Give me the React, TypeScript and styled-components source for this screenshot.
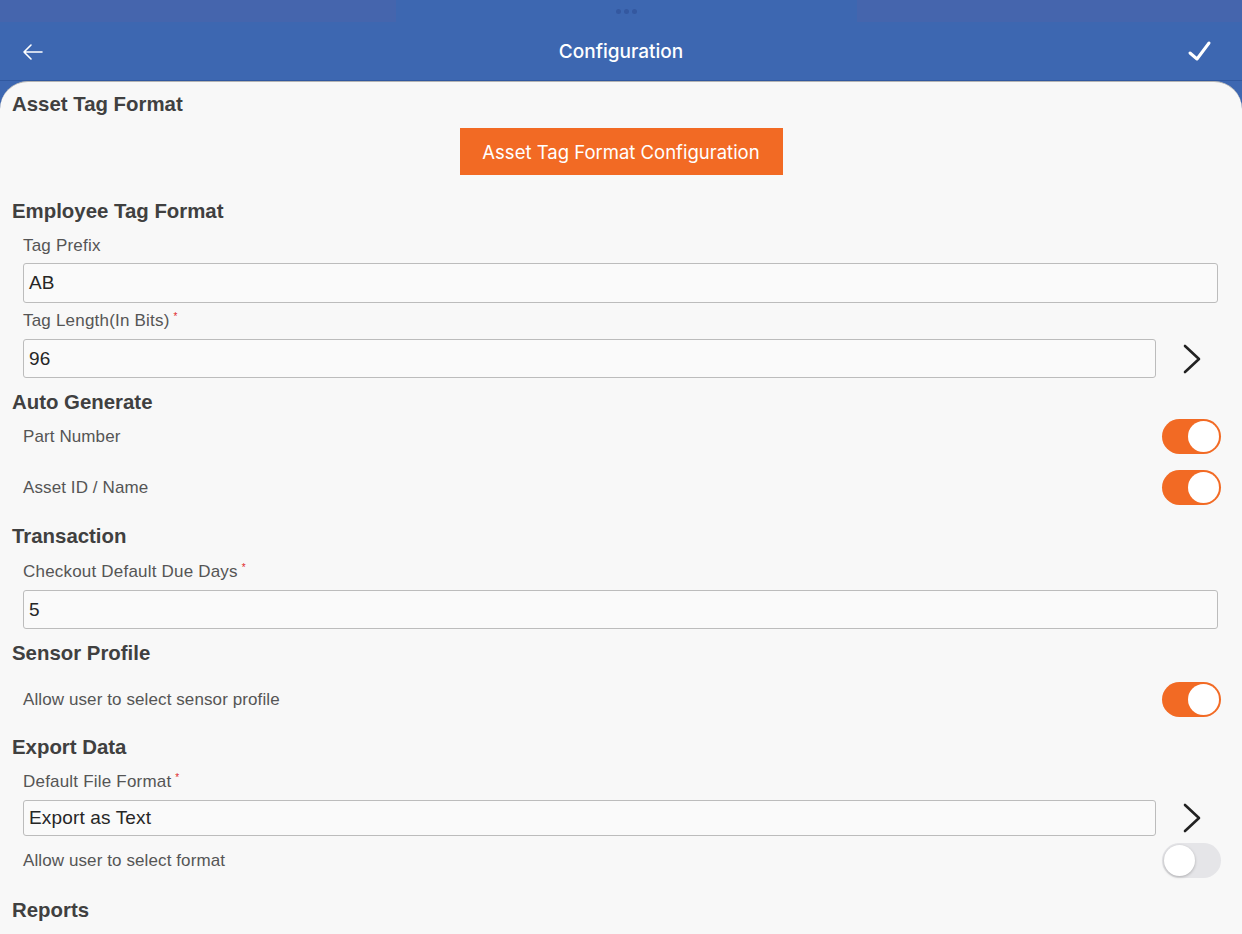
import React from "react";
import styled, { createGlobalStyle } from "styled-components";

const Global = createGlobalStyle`
  html, body { margin: 0; padding: 0; }
  body { background: #f8f8f8; font-family: "Liberation Sans", Arial, sans-serif; }
  * { box-sizing: border-box; }
`;

const Page = styled.div`
  width: 1242px;
  height: 934px;
  overflow: hidden;
  background: #3d67b1;
  display: flex;
  flex-direction: column;
`;

const StatusStrip = styled.div`
  height: 22px;
  display: grid;
  grid-template-columns: 396px 1fr 385px;
`;

const StripPart = styled.div<{ $tone: string }>`
  background: ${(p) => p.$tone};
  display: flex;
  align-items: center;
  justify-content: center;
  gap: 3px;
`;

const Dot = styled.span`
  width: 5px;
  height: 5px;
  border-radius: 50%;
  background: #3458a0;
`;

const Header = styled.header`
  height: 59px;
  display: flex;
  align-items: center;
  justify-content: space-between;
  padding: 1px 28px 0 22px;
  border-bottom: 1px solid #30589f;
  position: relative;
`;

const Title = styled.h1`
  margin: 0;
  position: absolute;
  left: 0;
  right: 0;
  text-align: center;
  font-family: Inter, "Noto Sans", sans-serif;
  font-weight: 500;
  font-size: 19px;
  color: #ffffff;
  pointer-events: none;
`;

const IconBtn = styled.button`
  background: none;
  border: 0;
  padding: 0;
  display: flex;
  align-items: center;
  z-index: 1;
`;

const Sheet = styled.main`
  flex: 1;
  background: #f8f8f8;
  border-radius: 28px 28px 0 0;
  border-top: 1px solid #b4b4b4;
  padding: 0 0 0 12px;
  display: flex;
  flex-direction: column;
`;

const SectionTitle = styled.h2<{ $mt: number }>`
  margin: ${(p) => p.$mt}px 0 0 0;
  height: 24px;
  line-height: 24px;
  font-size: 20.4px;
  font-weight: 700;
  color: #404040;
`;

const CenterRow = styled.div<{ $mt: number }>`
  margin-top: ${(p) => p.$mt}px;
  display: flex;
  justify-content: center;
  padding-right: 12px;
`;

const OrangeButton = styled.button`
  width: 323px;
  height: 47px;
  background: #f26a24;
  border: 0;
  color: #ffffff;
  font-family: Inter, "Noto Sans", sans-serif;
  font-size: 18.5px;
  font-weight: 400;
`;

const FieldLabel = styled.div<{ $mt: number }>`
  margin: ${(p) => p.$mt}px 0 0 11px;
  height: 20px;
  line-height: 20px;
  font-size: 17px;
  letter-spacing: 0.2px;
  color: #555555;
`;

const Required = styled.sup`
  color: #e0282a;
  font-size: 10px;
  margin-left: 4px;
  vertical-align: 6px;
  line-height: 0;
`;

const InputRow = styled.div<{ $mt: number; $h: number }>`
  margin: ${(p) => p.$mt}px 0 0 11px;
  height: ${(p) => p.$h}px;
  display: flex;
  align-items: stretch;
`;

const TextBox = styled.div<{ $chevron?: boolean }>`
  width: ${(p) => (p.$chevron ? "1133px" : "1195px")};
  border: 1px solid #bcbcbc;
  border-radius: 3px;
  background: #fafafa;
  display: flex;
  align-items: center;
  padding-left: 5px;
  font-size: 19px;
  letter-spacing: 0.15px;
  color: #262626;
`;

const ChevronWrap = styled.div`
  width: 72px;
  display: flex;
  align-items: center;
  justify-content: center;
  padding-right: 1px;
`;

const ToggleRow = styled.div<{ $mt: number }>`
  margin: ${(p) => p.$mt}px 21px 0 11px;
  height: 35px;
  display: flex;
  align-items: center;
  justify-content: space-between;
  font-size: 17px;
  letter-spacing: 0.1px;
  color: #555555;
`;

const Track = styled.div<{ $on: boolean }>`
  width: 59px;
  height: 35px;
  border-radius: 18px;
  background: ${(p) => (p.$on ? "#f26a24" : "#e5e5e8")};
  padding: 2px;
  display: flex;
  justify-content: ${(p) => (p.$on ? "flex-end" : "flex-start")};
`;

const Knob = styled.div<{ $on: boolean }>`
  width: 31px;
  height: 31px;
  border-radius: 50%;
  background: #ffffff;
  box-shadow: ${(p) => (p.$on ? "none" : "0 1px 3px rgba(0,0,0,0.25)")};
`;

const Chevron = () => (
  <svg width="20" height="32" viewBox="0 0 20 32">
    <polyline
      points="3,3 17,16 3,29"
      fill="none"
      stroke="#222"
      strokeWidth="2.6"
      strokeLinecap="round"
      strokeLinejoin="round"
    />
  </svg>
);

const Toggle = ({ on }: { on: boolean }) => (
  <Track $on={on}>
    <Knob $on={on} />
  </Track>
);

export default function App() {
  return (
    <>
      <Global />
      <Page>
        <StatusStrip>
          <StripPart $tone="#4565ad" />
          <StripPart $tone="#3d67b1">
            <Dot />
            <Dot />
            <Dot />
          </StripPart>
          <StripPart $tone="#4565ad" />
        </StatusStrip>
        <Header>
          <IconBtn aria-label="Back">
            <svg width="22" height="18" viewBox="0 0 22 18">
              <path
                d="M2 9 H20 M9 2 L2 9 L9 16"
                fill="none"
                stroke="#fff"
                strokeWidth="1.6"
                strokeLinecap="round"
                strokeLinejoin="round"
              />
            </svg>
          </IconBtn>
          <Title>Configuration</Title>
          <IconBtn aria-label="Save">
            <svg width="28" height="24" viewBox="0 0 28 24">
              <path
                d="M4 13 L11 19 L23 3"
                fill="none"
                stroke="#fff"
                strokeWidth="3"
                strokeLinecap="round"
                strokeLinejoin="round"
              />
            </svg>
          </IconBtn>
        </Header>
        <Sheet>
          <SectionTitle $mt={10}>Asset Tag Format</SectionTitle>
          <CenterRow $mt={12}>
            <OrangeButton>Asset Tag Format Configuration</OrangeButton>
          </CenterRow>

          <SectionTitle $mt={24}>Employee Tag Format</SectionTitle>
          <FieldLabel $mt={13}>Tag Prefix</FieldLabel>
          <InputRow $mt={7} $h={40}>
            <TextBox>AB</TextBox>
          </InputRow>
          <FieldLabel $mt={8}>
            Tag Length(In Bits)<Required>*</Required>
          </FieldLabel>
          <InputRow $mt={8} $h={39}>
            <TextBox $chevron>96</TextBox>
            <ChevronWrap>
              <Chevron />
            </ChevronWrap>
          </InputRow>

          <SectionTitle $mt={12}>Auto Generate</SectionTitle>
          <ToggleRow $mt={5}>
            <span>Part Number</span>
            <Toggle on />
          </ToggleRow>
          <ToggleRow $mt={16}>
            <span>Asset ID / Name</span>
            <Toggle on />
          </ToggleRow>

          <SectionTitle $mt={19}>Transaction</SectionTitle>
          <FieldLabel $mt={14}>
            Checkout Default Due Days<Required>*</Required>
          </FieldLabel>
          <InputRow $mt={8} $h={39}>
            <TextBox>5</TextBox>
          </InputRow>

          <SectionTitle $mt={12}>Sensor Profile</SectionTitle>
          <ToggleRow $mt={17}>
            <span>Allow user to select sensor profile</span>
            <Toggle on />
          </ToggleRow>

          <SectionTitle $mt={18}>Export Data</SectionTitle>
          <FieldLabel $mt={13}>
            Default File Format<Required>*</Required>
          </FieldLabel>
          <InputRow $mt={8} $h={36}>
            <TextBox $chevron>Export as Text</TextBox>
            <ChevronWrap>
              <Chevron />
            </ChevronWrap>
          </InputRow>
          <ToggleRow $mt={7}>
            <span>Allow user to select format</span>
            <Toggle on={false} />
          </ToggleRow>

          <SectionTitle $mt={20}>Reports</SectionTitle>
        </Sheet>
      </Page>
    </>
  );
}
